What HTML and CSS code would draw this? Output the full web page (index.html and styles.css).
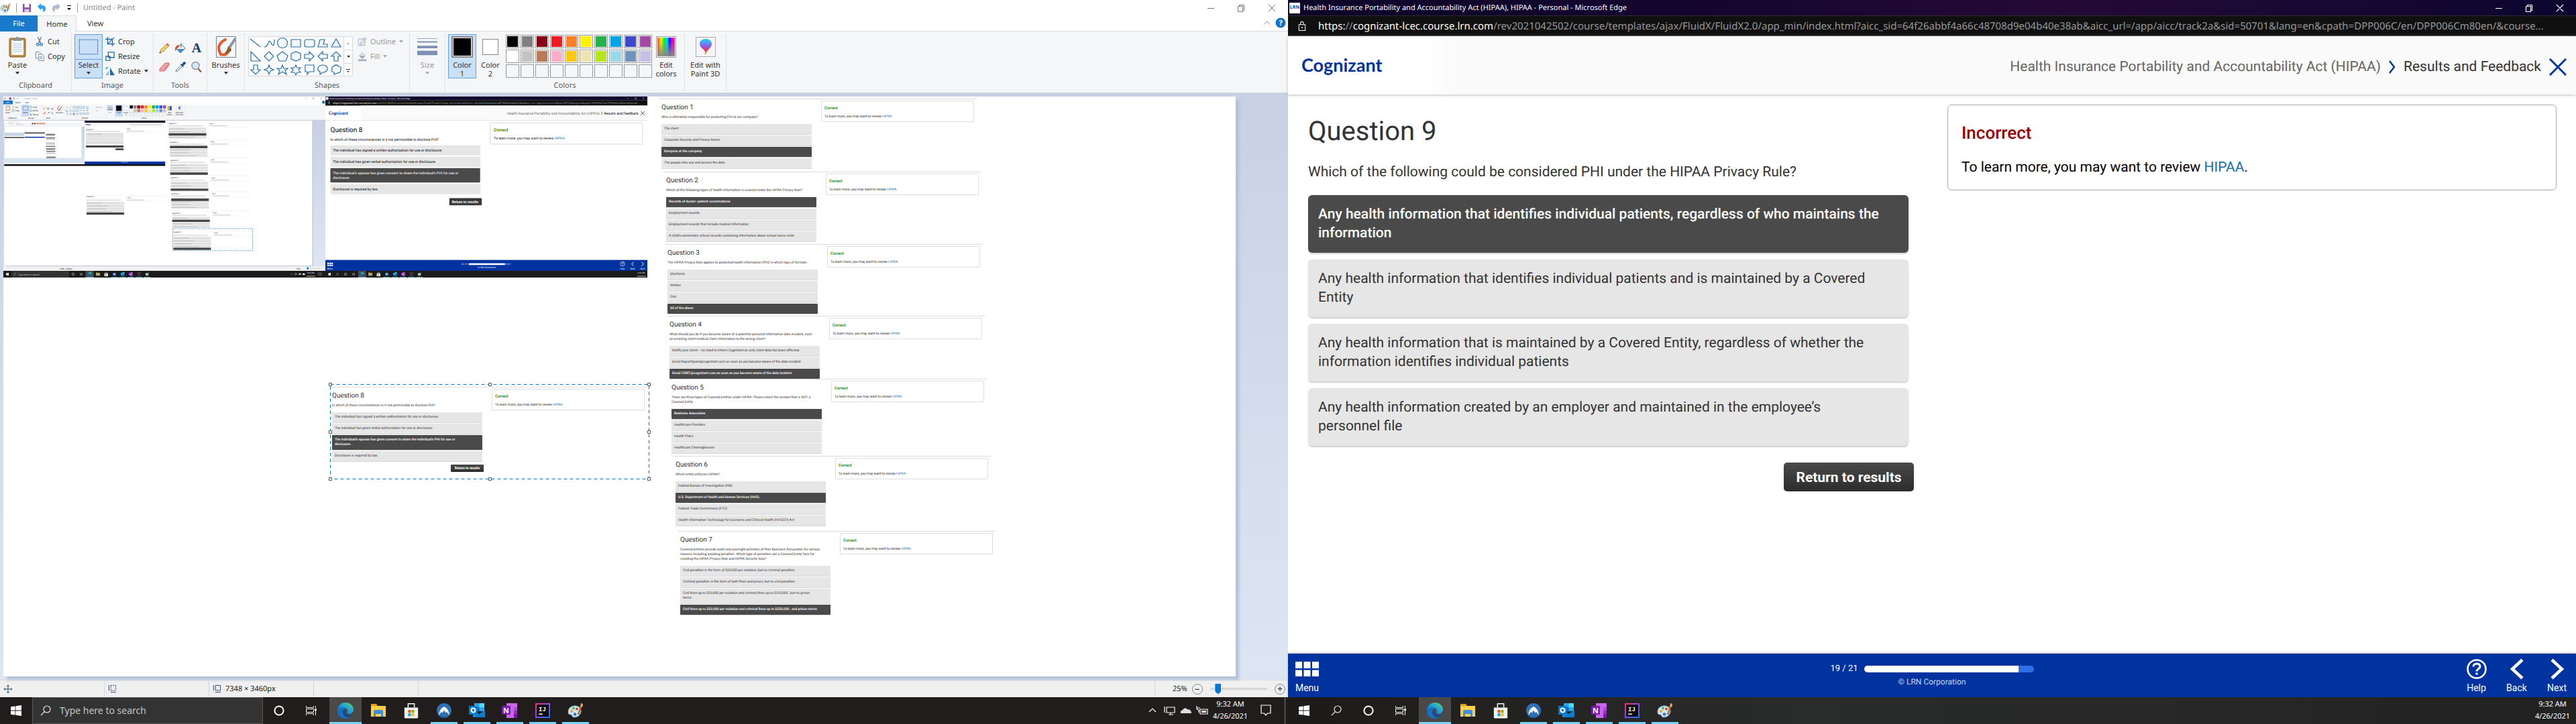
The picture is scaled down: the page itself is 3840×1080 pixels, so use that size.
FILE: index.html
```html
<!DOCTYPE html>
<html lang="en">
<head>
<meta charset="utf-8">
<title>Desktop</title>
<link rel="stylesheet" href="styles.css">
</head>
<body>
<svg class="defs" aria-hidden="true">
  <defs>
    <linearGradient id="g-edge" x1="0" y1="1" x2="1" y2="0"><stop offset="0" stop-color="#0c59a4"/><stop offset=".5" stop-color="#1b9de2"/><stop offset="1" stop-color="#5fd95a"/></linearGradient>
    <linearGradient id="g-ij" x1="0" y1="0" x2="1" y2="1"><stop offset="0" stop-color="#fe315d"/><stop offset=".5" stop-color="#8a4af7"/><stop offset="1" stop-color="#087cfa"/></linearGradient>
    <linearGradient id="g-rain" x1="0" x2="1" y1="0" y2="0"><stop offset="0" stop-color="#f33"/><stop offset=".2" stop-color="#fe0"/><stop offset=".4" stop-color="#0e2"/><stop offset=".55" stop-color="#0df"/><stop offset=".7" stop-color="#11f"/><stop offset=".85" stop-color="#e0e"/><stop offset="1" stop-color="#f14"/></linearGradient>
    <linearGradient id="g-fade" x1="0" x2="0" y1="0" y2="1"><stop offset=".2" stop-color="#888" stop-opacity="0"/><stop offset="1" stop-color="#888"/></linearGradient>
    <linearGradient id="g-p3d" x1="0" x2="0" y1="0" y2="1"><stop offset="0" stop-color="#18d8f5"/><stop offset=".4" stop-color="#7a6cf5"/><stop offset=".7" stop-color="#e0306a"/><stop offset="1" stop-color="#ffc20e"/></linearGradient>
    <linearGradient id="g-sky" x1="0" x2="0" y1="0" y2="1"><stop offset="0" stop-color="#c8d1e3"/><stop offset="1" stop-color="#dce6f3"/></linearGradient>
  </defs>
  <symbol id="i-start" viewBox="0 0 16 16"><path fill="#fff" d="M0 2.3 6.6 1.4V7.6H0zM7.4 1.3 16 0V7.6H7.4zM0 8.4H6.6V14.6L0 13.7zM7.4 8.4H16V16L7.4 14.7z"/></symbol>
  <symbol id="i-search" viewBox="0 0 16 16"><g fill="none" stroke="#e8e8e8" stroke-width="1.2"><circle cx="10" cy="6" r="5"/><path d="M6.4 9.6 1 15"/></g></symbol>
  <symbol id="i-cortana" viewBox="0 0 16 16"><circle cx="8" cy="8" r="6.6" fill="none" stroke="#fff" stroke-width="2"/></symbol>
  <symbol id="i-task" viewBox="0 0 16 16"><path fill="none" stroke="#fff" d="M.5 1v2.5h11V1M.5 15v-2.5h11V15M.5 5.5h11v5H.5zM14.5 1v3M14.5 8v7"/><path fill="#fff" d="M13 5h3v3h-3z"/></symbol>
  <symbol id="i-edge" viewBox="0 0 24 24"><path fill="url(#g-edge)" d="M12 0C19 0 24 5 24 10.5c0 4-3 6.500-7 6.500-3 0-3.500-1-2.500-2.500C16 12 14 7.500 9.500 7.500 4.500 7.500 1 10 0 13 0 5.500 5 0 12 0z"/><path fill="#1470c4" d="M0 13C1 9.500 4.500 7.500 9.500 7.500c1.500 0 3 .7 4 1.500-4 0-5.500 3-5.500 6 0 5 5 8 10 7-2 1.500-4 2-6 2C5 24 0 19 0 13z"/><path fill="#0d4a94" d="M9.500 11C7 14 9 21 15.500 21.500c2.500 0 5-1 6.500-3 .3-.5 0-.8-.5-.6-5 2-11-.5-12-6.900z"/></symbol>
  <symbol id="i-folder" viewBox="0 0 24 24"><path fill="#e3a008" d="M1 2h8l2 3H1z"/><path fill="#ffcf48" d="M1 5h22v16H1z"/><path fill="#3c8fdc" d="M5 21v-8q0-2 2-2h10q2 0 2 2v8h-3v-4H8v4z"/></symbol>
  <symbol id="i-store" viewBox="0 0 24 26"><path fill="none" stroke="#fff" stroke-width="1.600" d="M7 8V2h10v6"/><path fill="#f4f4f4" d="M1 8h22v16q0 1.500-2 1.500H3Q1 25.500 1 24z"/><path fill="#f25022" d="M7 12h4.500v4.500H7z"/><path fill="#7fba00" d="M12.500 12H17v4.500h-4.500z"/><path fill="#00a4ef" d="M7 17.500h4.500V22H7z"/><path fill="#ffb900" d="M12.500 17.500H17V22h-4.500z"/></symbol>
  <symbol id="i-nord" viewBox="0 0 24 24"><circle cx="12" cy="12" r="11" fill="#2f6fb4"/><path fill="#16386b" d="M3 17a11 11 0 0 0 18 0l-5 4H8z"/><path fill="#f2f7fc" d="M4 19Q5 9 12 6q7 3 8 13l-4-5-1.500 1.500-2.500-4-2.500 4L8 14z"/></symbol>
  <symbol id="i-outlook" viewBox="0 0 24 24"><path fill="#28a8ea" d="M8 1h15v12H8z"/><path fill="#50d9ff" d="M15.500 1H23v6h-7.500z"/><path fill="#0f6cbd" d="M8 7h7.500v6H8z"/><path fill="#1490df" d="M6 12l9 5 9-5v10H6z"/><path fill="#0a5ea8" d="M6 22 24 12v10z" opacity=".4"/><path fill="#0078d4" d="M0 5h13v13H0z"/><circle cx="6.500" cy="11.500" r="3" fill="none" stroke="#fff" stroke-width="2"/></symbol>
  <symbol id="i-onenote" viewBox="0 0 24 24"><path fill="#ca64ea" d="M7 1h16v22H7z"/><path fill="#ae4bd5" d="M18 7h5v5h-5z"/><path fill="#9332bf" d="M18 12h5v5h-5z"/><path fill="#7719aa" d="M18 17h5v6h-5z"/><path fill="#7719aa" d="M0 5h13v13H0z"/><text x="6.500" y="15.500" text-anchor="middle" font-family="Open Sans, sans-serif" font-weight="700" font-size="11" fill="#fff">N</text></symbol>
  <symbol id="i-ij" viewBox="0 0 24 24"><path fill="url(#g-ij)" d="M1 1h22v22H1z"/><path fill="#0b0b0b" d="M3 3h18v18H3z"/><path fill="#fff" d="M6 16.500h6V18H6z"/><text x="6" y="13" font-family="Liberation Mono, monospace" font-weight="700" font-size="9" fill="#fff">IJ</text></symbol>
  <symbol id="i-paint" viewBox="0 0 24 24"><path fill="#cfe4f2" stroke="#6f9fc0" stroke-width=".8" d="M9 5c7-1 12 3 11 9-1 5-5 8-10 8-4 0-3-4-5-4-4 0-4-2-4-4 0-5 3-8 8-9z"/><circle cx="6" cy="13" r="2" fill="#f0a020"/><circle cx="9" cy="8.500" r="2" fill="#54b848"/><circle cx="14" cy="9.500" r="2" fill="#e3402c"/><circle cx="11" cy="17.500" r="2.200" fill="#2b6fd0"/><path stroke="#b06a20" stroke-width="2.400" d="M16 18 20.500 5"/><path fill="#e9a060" d="M19 6l1-5q3 0 3 3l-1 3z"/></symbol>
  <symbol id="i-dots" viewBox="0 0 35 22"><path fill="#fff" d="M0 0h10v10H0zM12.500 0h10v10h-10zM25 0h10v10H25zM0 12.500h10v9.500H0zM12.500 12.500h10v9.500h-10zM25 12.500h10v9.500H25z"/></symbol>
  <symbol id="i-help" viewBox="0 0 32 32"><circle cx="16" cy="16" r="13.500" fill="none" stroke="#fff" stroke-width="2.600"/><path fill="none" stroke="#fff" stroke-width="3" d="M11 12.500c0-6 10-6 10-.5 0 4-5 3.500-5 7.500M16 21.500v3"/></symbol>
  <symbol id="i-back" viewBox="0 0 20 28"><path fill="none" stroke="#fff" stroke-width="4" d="M17 2 4 14l13 12"/></symbol>
  <symbol id="i-next" viewBox="0 0 20 28"><path fill="none" stroke="#fff" stroke-width="4" d="M3 2l13 12L3 26"/></symbol>
  <symbol id="i-clip" viewBox="0 0 26 32"><rect x="1" y="3" width="24" height="28" rx="2" fill="#b98843" stroke="#8a6227"/><path fill="#fff" stroke="#c8b890" stroke-width=".5" d="M4 6h18v22H4z"/><path stroke="#9ec1e0" d="M6 11h14M6 14h14M6 17h14M6 20h14M6 23h14"/><path fill="#8b939c" d="M7 4h3q0-3 3-3t3 3h3v3H7z"/></symbol>
  <symbol id="i-pencil" viewBox="0 0 18 18"><path fill="#f6cf65" stroke="#a0752c" stroke-width=".8" d="M2 16l2-5L13 2l3 3L7 14z"/><path fill="#e2574a" d="M12 3l1.500-1.500 3 3L15 6z"/><path fill="#333" d="M1.500 16.500l1-2.500 1.500 1.500z"/></symbol>
  <symbol id="i-bucket" viewBox="0 0 18 18"><path fill="#eef4fa" stroke="#58738f" d="M3 10 10 3l6 6-7 7z"/><path fill="#3e8ed0" d="M4 10h11l-6 6z"/><path fill="#e8542c" d="M1 9q1-5 7-5l-4 5q-1 3-3 4z"/><path fill="none" stroke="#58738f" d="M10 8V1"/></symbol>
  <symbol id="i-eraser" viewBox="0 0 18 18"><path fill="#f2a0a0" stroke="#b85858" stroke-width=".8" d="M2 12 10 3h6v3l-7 9H2z"/><path fill="#dd7474" d="M9 12l7-8v2l-7 9z"/></symbol>
  <symbol id="i-dropper" viewBox="0 0 18 18"><path fill="#cfe3f4" stroke="#58738f" stroke-width=".8" d="M2 16l1-3 7-7 2 2-7 7z"/><path fill="#1f4f86" d="M9 5l1-1 1 1 3-4q3 0 3 3l-4 3 1 1-1 1z"/></symbol>
  <symbol id="i-glass" viewBox="0 0 18 18"><circle cx="7.500" cy="7" r="5.500" fill="#d4e8f8" stroke="#8795a3" stroke-width="1.400"/><path stroke="#8b6a4a" stroke-width="2.600" d="M11.500 11.500 16 16.500"/></symbol>
  <symbol id="i-brush" viewBox="0 0 30 32"><path fill="#f4f9fd" stroke="#7a8087" d="M.5.5h29v31H.5z"/><path fill="none" stroke="#e8562a" stroke-width="4" stroke-linecap="round" d="M14 5C3 11 2 18 7 27q7 2 10-2"/><path stroke="#8b939c" stroke-width="4" d="M29 3l-9 14"/><path fill="#8a5a2b" d="M18 15l5 4q0 7-11 7 4-3 6-11z"/></symbol>
</svg>

<main class="desktop">
<section class="screen paint" aria-label="Paint">
  <header class="titlebar">
    <svg class="t-app"><use href="#i-paint"/></svg><i class="tsep"></i>
    <svg class="t-i" viewBox="0 0 16 16"><path fill="#8b57a8" d="M1 1h14v14H1z"/><path fill="#fff" d="M4 1h8v6H4z"/><path fill="#d9c8e6" d="M4 10h8v5H4z"/></svg>
    <svg class="t-i" viewBox="0 0 16 16"><path fill="#2ea3e8" d="M1 5 7 0v3q8 0 8 6 0 4-5 6 2-7-3-6v3z"/></svg>
    <svg class="t-i" viewBox="0 0 16 16"><path fill="#aebccb" d="M15 5 9 0v3Q1 3 1 9q0 4 5 6-2-7 3-6v3z"/></svg>
    <svg class="t-c" viewBox="0 0 8 8"><path d="M1 0h6v1H1zM1 4h6L4 7z"/></svg><i class="tsep"></i>
    <h1>Untitled - Paint</h1>
    <svg class="winbtns" viewBox="0 0 108 12"><g fill="none" stroke="#777"><path d="M2 6.500h10M47.500 3.500h7v8h-7zM49.500 3V1.500h7v8H55M93 1l10 10M103 1 93 11"/></g></svg>
  </header>
  <nav class="tabs"><button class="file">File</button><button class="home">Home</button><button class="view">View</button>
    <svg class="tabhelp" viewBox="0 0 34 16"><path fill="none" stroke="#888" d="M2 10l4-4 4 4"/><circle cx="26" cy="8" r="7.500" fill="#1572c6"/><text x="26" y="12" text-anchor="middle" font-size="11" font-weight="700" fill="#fff" font-family="Open Sans, sans-serif">?</text></svg></nav>
  <div class="ribbon">
    <div class="group g-clip"><div class="gb">
      <button class="big"><svg class="bi"><use href="#i-clip"/></svg>Paste<i class="dd"></i></button>
      <div class="rows"><button class="row"><svg viewBox="0 0 16 16"><path fill="none" stroke="#6c7883" stroke-width="1.500" d="M5 0l5 11M11 0 6 11"/><g fill="none" stroke="#2a79bd" stroke-width="1.600"><circle cx="5" cy="13" r="2"/><circle cx="11" cy="13" r="2"/></g></svg>Cut</button><button class="row"><svg viewBox="0 0 16 16"><path fill="#fff" stroke="#6c7883" d="M1.500.5h6l2 2v9h-8z"/><path fill="#fff" stroke="#6c7883" d="M6.500 4.500h6l2.500 2.500v8.500H6.500z"/><path stroke="#5aa0d8" d="M8 8.500h5M8 10.500h5M8 12.500h5"/></svg>Copy</button></div>
    </div><p>Clipboard</p></div>
    <div class="group g-image"><div class="gb">
      <button class="big sel split"><svg class="bi" viewBox="0 0 32 26"><path fill="none" stroke="#1e5a96" stroke-dasharray="2 1" d="M1.500 1.500h29v23h-29z"/></svg>Select<i class="dd"></i></button>
      <div class="rows"><button class="row"><svg viewBox="0 0 16 16"><path fill="none" stroke="#1e6aa8" stroke-width="1.500" d="M4 0v12h12M0 4h12v12M5 11 15 1"/></svg>Crop</button><button class="row"><svg viewBox="0 0 16 16"><path fill="#fff" stroke="#1e6aa8" stroke-width="1.500" d="M5 1h10v9H5zM1 8h7v7H1z"/></svg>Resize</button><button class="row"><svg viewBox="0 0 16 16"><path fill="#9fb6cc" d="M0 15h6V7z"/><path fill="#1e6aa8" d="M8 2v13h8z"/><path fill="none" stroke="#2ea3e8" stroke-width="1.500" d="M1 5q0-3 4-3"/></svg>Rotate<i class="dd"></i></button></div>
    </div><p>Image</p></div>
    <div class="group g-tools"><div class="gb tools">
      <svg><use href="#i-pencil"/></svg><svg><use href="#i-bucket"/></svg><b>A</b><svg><use href="#i-eraser"/></svg><svg><use href="#i-dropper"/></svg><svg><use href="#i-glass"/></svg>
    </div><p>Tools</p></div>
    <div class="group g-brush"><div class="gb"><button class="big"><svg class="bi"><use href="#i-brush"/></svg>Brushes<i class="dd"></i></button></div></div>
    <div class="group g-shapes"><div class="gb">
      <svg class="shapes" viewBox="0 0 156 60"><path fill="#fdfdfe" stroke="#d4d8de" d="M.5.5h155v59H.5z"/><path stroke="#d4d8de" d="M142.500 0v60M142 20.500h14M142 40.500h14"/>
        <g fill="#f2f8fd" stroke="#2a6fa8" stroke-width="1.200"><path d="M3 4l15 12"/><path fill="none" d="M24 16q4 0 6-6t5 2q4 6 4-7"/><circle cx="51" cy="10" r="7.500"/><path d="M64 5h14v11H64z"/><rect x="84" y="5" width="15" height="11" rx="3"/><path d="M104 16l3-11h7l-2 7h6v4z"/><path d="M124 16l7-12 7 12z"/>
        <path d="M4 23v14h14z"/><path d="M31 23l7 7-7 7-7-7z"/><path d="M51 23l8 6-3 8H46l-3-8z"/><path d="M64 26l7-3 7 3v8l-7 3-7-3z"/><path d="M84 27h7v-4l7 7-7 7v-4h-7z"/><path d="M118 27h-7v-4l-7 7 7 7v-4h7z"/><path d="M128 37v-7h-4l7-7 7 7h-4v7z"/>
        <path d="M8 43v7H4l7 7 7-7h-4v-7z"/><path d="M31 43l2 5 5 2-5 2-2 5-2-5-5-2 5-2z"/><path d="M51 43l2 5h6l-4 3 2 6-6-4-6 4 2-6-4-3h6z"/><path d="M71 43l2 4h5l-3 3 3 4h-5l-2 4-2-4h-5l3-4-3-3h5z"/><path d="M85 43h13v10H91l-3 4v-4h-3z"/><path d="M111 43c10 0 9 11 0 11l-4 3v-4c-6-3-3-10 4-10z"/><path d="M127 45q4-4 8 0 5 1 3 5 0 5-5 5l-5 2v-3q-5-1-3-5-1-3 2-4z"/></g>
        <path fill="#aaa" d="M147 12l2-3 2 3z"/><path fill="#333" d="M147 29h5l-2 3zM146 49h6v1h-6zM147 52h4l-2 2z"/></svg>
      <div class="rows off"><button class="row" disabled><svg viewBox="0 0 16 16"><path fill="#eef1f5" stroke="#9aa9bb" d="M1.500 3.500h11v11h-11zM4 13l1-3 8-9 2 2-8 9z"/></svg>Outline<i class="dd"></i></button><button class="row" disabled><svg viewBox="0 0 16 16"><path fill="#e5eaf0" stroke="#9aa9bb" d="M3 7l5-5 5 5-5 5z"/><path fill="#9aa9bb" d="M1 13h14v3H1zM3 7h10l-5 5z"/></svg>Fill<i class="dd"></i></button></div>
    </div><p>Shapes</p></div>
    <div class="group g-size off"><div class="gb"><button class="big" disabled><svg class="bi" viewBox="0 0 32 30"><path fill="#7d8fb3" d="M0 1h32v1H0zM0 6h32v2H0zM0 13h32v4H0zM0 21h32v7H0z"/></svg>Size<i class="dd"></i></button></div></div>
    <div class="group g-colors"><div class="gb">
      <button class="big sel"><span class="cur c1"></span>Color<br>1</button>
      <button class="big"><span class="cur c2"></span>Color<br>2</button>
      <div class="palette">
        <i style="background:#000"></i><i style="background:#7f7f7f"></i><i style="background:#880015"></i><i style="background:#ed1c24"></i><i style="background:#ff7f27"></i><i style="background:#fff200"></i><i style="background:#22b14c"></i><i style="background:#00a2e8"></i><i style="background:#3f48cc"></i><i style="background:#a349a4"></i>
        <i style="background:#fff"></i><i style="background:#c3c3c3"></i><i style="background:#b97a57"></i><i style="background:#ffaec9"></i><i style="background:#ffc90e"></i><i style="background:#efe4b0"></i><i style="background:#b5e61d"></i><i style="background:#99d9ea"></i><i style="background:#7092be"></i><i style="background:#c8bfe7"></i>
        <i class="e"></i><i class="e"></i><i class="e"></i><i class="e"></i><i class="e"></i><i class="e"></i><i class="e"></i><i class="e"></i><i class="e"></i><i class="e"></i>
      </div>
      <button class="big"><svg class="bi" viewBox="0 0 28 30"><path fill="#fff" stroke="#999" d="M.5.5h27v29H.5z"/><path fill="url(#g-rain)" d="M2 2h24v26H2z"/><path fill="url(#g-fade)" d="M2 2h24v26H2z"/></svg>Edit<br>colors</button>
    </div><p>Colors</p></div>
    <div class="group g-3d"><div class="gb"><button class="big"><svg class="bi" viewBox="0 0 30 30"><path fill="#f6f6f6" stroke="#aaa" d="M.5.5h29v29H.5z"/><path fill="url(#g-p3d)" d="M15 3c6 0 9 4 9 8 0 5-7 8-8 13q-1 3-3 3 2-3 0-7C9 17 6 14 6 10c0-4 4-7 9-7z"/></svg>Edit with<br>Paint 3D</button></div></div>
  </div>

  <div class="workspace"><div class="canvas">
    <svg class="shot" viewBox="0 0 3840 1080" role="img" aria-label="Pasted screenshot">
      <defs>
        <g id="apps"><rect x="-24" y="-20" width="48" height="40" fill="#4a4a4a"/><use href="#i-edge" x="-12" y="-12" width="24" height="24"/><use href="#i-folder" x="37" y="-12" width="24" height="24"/><use href="#i-store" x="86" y="-13" width="24" height="26"/><use href="#i-nord" x="136" y="-11" width="22" height="22"/><use href="#i-outlook" x="184" y="-12" width="24" height="24"/><use href="#i-onenote" x="233" y="-12" width="24" height="24"/><use href="#i-ij" x="283" y="-11" width="22" height="22"/><use href="#i-paint" x="331" y="-12" width="24" height="24"/><path stroke="#76d5f5" stroke-width="3" d="M-24 18.500h48M127 18.500h40M176 18.500h40M225 18.500h40M274 18.500h40M323 18.500h40"/></g>
        <g id="qt"><path stroke="#e2e2e2" d="M-3 .5h473"/><path fill="#fff" stroke="#ddd" d="M238.500 3.500h227v32h-227z"/><path stroke="#43974a" stroke-width="3" d="M243 14.500h22"/><path stroke="#777" stroke-width="2" stroke-dasharray="7 1" d="M243 27.500h86"/><path stroke="#4d94c8" stroke-width="2" d="M330 27.500h18"/><path stroke="#888" stroke-width="2" stroke-dasharray="9 1" d="M0 28.500h205"/></g>
        <g id="q4"><use href="#qt"/><path fill="#e2e2e2" d="M0 38h224v15H0zM0 55h224v15H0zM0 72h224v15H0zM0 89h224v15H0z"/><path stroke="#999" stroke-width="2" stroke-dasharray="8 1" d="M4 45.500h90M4 62.500h120M4 79.500h110M4 96.500h150"/></g>
      </defs>
      <rect width="1920" height="1080" fill="#fff"/>
      <use href="#i-paint" x="2" y="4" width="16" height="16"/><path fill="#8b57a8" d="M34 5h14v14H34z"/><path fill="#2ea3e8" d="M56 10l6-6v4q8 0 6 8l-5 3q2-6-1-7v3z"/><path fill="#b8c4d0" d="M92 10l-6-6v4q-8 0-6 8l5 3q-2-6 1-7v3z"/><path stroke="#999" d="M23.500 5v14M115.500 5v14"/>
      <path fill="#1979ca" d="M0 23h56v24H0z"/><path fill="#f5f6f7" d="M0 47h1920v92H0zM56 23h57v24H56z"/>
      <path fill="none" stroke="#777" stroke-width="1.500" d="M1800 11h10M1845 7h8v8h-8zM1890 6l10 10M1900 6l-10 10"/><circle cx="1909" cy="34" r="9" fill="#1572c6"/>
      <path fill="#c9e0f7" stroke="#62a2e4" d="M111 51h42v66h-42zM668 51h42v66h-42z"/>
      <path stroke="#dcdde0" d="M106.500 49v86M228.500 49v86M308.500 49v86M364.500 49v86M610.500 49v86M663.500 49v86M1020.500 49v86M1082.500 49v86"/>
      <use href="#i-clip" x="14" y="53" width="26" height="32"/><use href="#i-brush" x="320" y="54" width="30" height="32"/><use href="#i-pencil" x="235" y="62" width="18" height="18"/><use href="#i-bucket" x="259" y="62" width="18" height="18"/><use href="#i-eraser" x="235" y="90" width="18" height="18"/><use href="#i-dropper" x="259" y="90" width="18" height="18"/><use href="#i-glass" x="283" y="90" width="18" height="18"/>
      <path fill="none" stroke="#1e5a96" stroke-width="1.500" d="M117 58h30v24h-30zM159 57h10v10h-10zM159 79h10v10h-10zM52 77h12v14H52zM56 55l5 14"/><path fill="#1e6aa8" d="M160 112v-12l9 12z"/><path fill="#7d8fb3" d="M620 54h32v2h-32zM620 60h32v3h-32zM620 67h32v4h-32zM620 75h32v7h-32z"/>
      <g fill="#f2f8fd" stroke="#2a6fa8" stroke-width="1.500"><path d="M374 58l14 12M396 69l10-10M434 59h14v11h-14zM454 59h14v11h-14zM474 70l4-11h8l-3 11zM494 70l7-12 7 12zM374 77v14h14zM401 77l7 7-7 7-7-7zM434 80l7-3 7 3v8l-7 3-7-3zM454 84h14l-7-7M488 84h-14l7-7M501 77v14M494 84l7-7 7 7M381 97v14l-7-7M401 97v14M394 104h14M421 97l6 14-13-9h14l-13 9zM434 100h14l-7 11zM454 98h14v9h-10zM474 98h14v9h-10zM494 98h14v9h-10z"/><circle cx="421" cy="64" r="7"/><path d="M421 77l8 6-3 8h-10l-3-8z"/></g>
      <path fill="#000" d="M673 54h32v32h-32z"/><path fill="#fff" stroke="#888" d="M719 58h24v24h-24z"/>
      <g><path fill="#000" d="M754 53h18v18h-18z"/><path fill="#7f7f7f" d="M776 53h18v18h-18z"/><path fill="#880015" d="M798 53h18v18h-18z"/><path fill="#ed1c24" d="M820 53h18v18h-18z"/><path fill="#ff7f27" d="M842 53h18v18h-18z"/><path fill="#fff200" d="M864 53h18v18h-18z"/><path fill="#22b14c" d="M886 53h18v18h-18z"/><path fill="#00a2e8" d="M908 53h18v18h-18z"/><path fill="#3f48cc" d="M930 53h18v18h-18z"/><path fill="#a349a4" d="M952 53h18v18h-18z"/><path fill="#fff" stroke="#999" d="M754 75h18v18h-18z"/><path fill="#c3c3c3" d="M776 75h18v18h-18z"/><path fill="#b97a57" d="M798 75h18v18h-18z"/><path fill="#ffaec9" d="M820 75h18v18h-18z"/><path fill="#ffc90e" d="M842 75h18v18h-18z"/><path fill="#efe4b0" d="M864 75h18v18h-18z"/><path fill="#b5e61d" d="M886 75h18v18h-18z"/><path fill="#99d9ea" d="M908 75h18v18h-18z"/><path fill="#7092be" d="M930 75h18v18h-18z"/><path fill="#c8bfe7" d="M952 75h18v18h-18z"/><path fill="none" stroke="#999" d="M754 97h216v18H754zM776 97v18M798 97v18M820 97v18M842 97v18M864 97v18M886 97v18M908 97v18M930 97v18M952 97v18"/></g>
      <path fill="url(#g-rain)" d="M980 57h24v26h-24z"/><path fill="#fff" stroke="#aaa" d="M1035 55h30v30h-30z"/><path fill="url(#g-p3d)" d="M1050 58c8 0 10 8 6 12l-6 12-6-12c-4-4-2-12 6-12z"/>
      <g class="ui"><text x="123" y="17" fill="#777">Untitled - Paint</text><text x="18" y="39" fill="#fff">File</text><text x="70" y="39">Home</text><text x="129" y="39">View</text>
      <g text-anchor="middle"><text x="26" y="100">Paste</text><text x="132" y="100">Select</text><text x="335" y="100">Brushes</text><text x="635" y="100" fill="#999">Size</text><text x="689" y="100">Color</text><text x="689" y="113">1</text><text x="731" y="100">Color</text><text x="731" y="113">2</text><text x="992" y="100">Edit</text><text x="992" y="113">colors</text><text x="1050" y="100">Edit with</text><text x="1050" y="113">Paint 3D</text><text x="53" y="133">Clipboard</text><text x="166" y="133">Image</text><text x="267" y="133">Tools</text><text x="486" y="133">Shapes</text><text x="840" y="133">Colors</text><text x="291" y="77" font-weight="700">A</text></g>
      <text x="70" y="66">Cut</text><text x="70" y="88">Copy</text><text x="175" y="66">Crop</text><text x="175" y="88">Resize</text><text x="175" y="110">Rotate</text><text x="552" y="66" fill="#999">Outline</text><text x="552" y="88" fill="#999">Fill</text></g>
      <path fill="url(#g-sky)" d="M0 139h1920v875H0z"/><path fill="#b9c5da" d="M14 152h1833v862H14z"/><path fill="#fff" d="M5 144h1837v865H5z"/>
      <path fill="#f5f6f7" d="M5 156h480v23H5z"/><path fill="url(#g-sky)" d="M5 179h480v219H5z"/><path fill="#fff" d="M7 180h459v187H7z"/><path fill="#c9d4e6" d="M7 215h118v20H7z"/><path fill="#f0f0f0" d="M5 398h480v6H5z"/>
      <path fill="none" stroke="#888" stroke-dasharray="5 3" stroke-width="2" d="M30 151h60M30 161h30M75 168h50M80 162h18"/><path fill="#111" d="M127 215h120v5H127zM5 404h960v10H5zM7 242h117v5H7z"/><path fill="#0033a0" d="M127 240h120v6H127z"/><path stroke="#ed5c24" stroke-width="7" stroke-dasharray="5 2" d="M195 161h54"/><path stroke="#222" stroke-width="7" stroke-dasharray="8 5" d="M170 161h22"/>
      <g><path fill="#ccc" d="M254 220h54v13h-54zM254 245h54v14h-54zM254 273h54v14h-54zM255 305h54v10h-54zM256 332h54v10h-54zM257 355h54v10h-54z"/><path fill="#333" d="M254 226h54v4h-54zM254 245h54v3h-54zM254 295h54v4h-54zM255 312h54v4h-54zM256 324h54v4h-54zM257 362h54v4h-54z"/><path stroke="#8bbd8b" stroke-width="2" d="M310 217h6M313 244h6M313 271h6M313 297h6M314 321h6M315 350h6"/></g>
      <path fill="#fff" d="M485 144h480v260H485z"/><path fill="#12061f" d="M485 144h480v13H485z"/><path fill="#fafafa" d="M485 157h480v22H485z"/><path stroke="#1b3d9c" stroke-width="4" d="M490 168h32"/><path stroke="#888" stroke-width="2" stroke-dasharray="8 1" d="M755 168h190"/>
      <use href="#q4" x="492" y="179"/><path fill="#e2e2e2" d="M492 230h224v55H492z"/><path stroke="#fff" stroke-width="2" d="M492 246h224M492 262h224"/><path fill="#444" d="M492 292h224v12H492zM669 309h48v11H669z"/><path fill="#0033a0" d="M485 388h480v16H485z"/><path stroke="#fff" stroke-width="2" d="M700 393h46"/>
      <g class="hd"><text x="492" y="198">Question 7</text><text x="987" y="165">Question 1</text><text x="993" y="274">Question 2</text><text x="995" y="382">Question 3</text><text x="998" y="489">Question 4</text><text x="1007" y="698">Question 6</text><text x="1014" y="810">Question 7</text><text x="496" y="601">Question 7</text></g>
      <use href="#q4" x="986" y="147"/><use href="#q4" x="993" y="256"/><use href="#q4" x="995" y="364"/><use href="#q4" x="998" y="471"/><path fill="#fff" d="M998 565h500v14H998z"/><use href="#q4" x="1001" y="565"/><use href="#q4" x="1007" y="680"/><use href="#q4" x="1014" y="799"/><use href="#q4" x="496" y="590"/><text class="hdt" x="1001" y="583">Question 5</text>
      <path fill="#444" d="M986 219h224v14H986zM993 294h224v14H993zM995 453h224v14H995zM998 550h224v12H998zM1001 609h224v14h-224zM1007 735h224v13h-224zM1014 902h224v13h-224zM496 692h224v13H496z"/>
      <path fill="none" stroke="#1b87d6" stroke-width="3" stroke-dasharray="8 6" d="M1010 788h476v131h-476z"/>
      <path fill="#f0f0f0" d="M0 1014h1920v26H0z"/><g class="ui"><text x="336" y="1032">7348 × 3460px</text><text x="1749" y="1032">25%</text></g><path fill="#0078d7" d="M1810 1018h9v14h-9z"/><path stroke="#bbb" stroke-width="2" d="M1820 1027h68"/>
      <rect y="1040" width="3840" height="40" fill="#1c1b1b"/><path fill="#333" d="M48 1040h344v40H48z"/><use href="#i-start" x="16" y="1052" width="16" height="16"/><use href="#i-search" x="60" y="1052" width="16" height="16"/><text x="88" y="1066" fill="#ccc" font-size="14" font-family="Noto Sans, sans-serif">Type here to search</text><use href="#i-cortana" x="408" y="1052" width="16" height="16"/><use href="#i-task" x="456" y="1052" width="16" height="16"/><use href="#apps" x="515" y="1060"/>
      <g fill="none" stroke="#fff" stroke-width="1.500"><path d="M1713 1063l5-5 5 5M1737 1055h12v8h-12zM1879 1053h16v12h-6l-3 3-3-3h-4z"/></g><path fill="#fff" d="M1760 1062h15v-4l-8-4-7 5zM1784 1056h14v8h-14z"/><g class="ui lt" text-anchor="middle"><text x="1834" y="1056">9:32 AM</text><text x="1834" y="1074">4/26/2021</text><text x="3805" y="1056">9:32 AM</text><text x="3805" y="1074">4/26/2021</text></g>
      <use href="#i-start" x="1937" y="1052" width="16" height="16"/><use href="#i-search" x="1984" y="1052" width="16" height="16"/><use href="#i-cortana" x="2032" y="1052" width="16" height="16"/><use href="#i-task" x="2080" y="1052" width="16" height="16"/><use href="#apps" x="2139" y="1060"/>
      <rect x="1920" width="1920" height="1040" fill="#fff"/><rect x="1920" width="1920" height="23" fill="#10062a"/><rect x="1920" y="23" width="1920" height="31" fill="#101010"/><rect x="1922" y="3" width="16" height="16" fill="#fff"/><g font-family="Noto Sans, sans-serif"><text x="1943" y="17" fill="#fff" font-size="11">Health Insurance Portability and Accountability Act (HIPAA), HIPAA - Personal - Microsoft Edge</text><text x="1965" y="44" fill="#999" font-size="15"><tspan fill="#fff">https://cognizant-lcec.course.lrn.com</tspan>/rev2021042502/course/templates/ajax/FluidX/FluidX2.0/app_min/index.html?aicc_sid=64f26abbf4a66c48708d9e04b40e38ab&amp;aicc_url=/app/aicc/track2a&amp;sid=50701&amp;lang=en&amp;cpath=DPP006C/en/DPP006Cm80en/&amp;course...</text></g>
      <path fill="none" stroke="#fff" stroke-width="1.500" d="M3719 11h10M3766 7h8v8h-8zM3812 6l10 10M3822 6l-10 10M1938 34h8v9h-8zM1940 34v-4h4v4"/>
      <g class="rb"><rect x="2130" y="54" width="1710" height="87" fill="#fafafa"/><path stroke="#ddd" stroke-width="3" d="M1920 142h1920"/><text x="1940" y="106" class="cg">Cognizant</text><text x="3003" y="108" fill="#666" font-size="21">Health Insurance Portability and Accountability Act (HIPAA)</text><path fill="none" stroke="#0033a0" stroke-width="3" d="M3565 91l6 9-6 9M3800 88l24 24M3824 88l-24 24"/><text x="3582" y="108" font-size="21">Results and Feedback</text>
      <text x="1950" y="210" font-size="40">Question 8</text><text x="1950" y="264" font-size="21">In which of these circumstances is it not permissible to disclose PHI?</text>
      <g fill="#e6e6e6"><rect x="1950" y="291" width="895" height="60" rx="6"/><rect x="1950" y="359" width="895" height="60" rx="6"/><rect x="1950" y="427" width="893" height="86" rx="6" fill="#4a4a4a"/><rect x="1950" y="523" width="895" height="60" rx="6"/><rect x="2659" y="606" width="194" height="43" rx="6" fill="#3a3a3a"/></g>
      <g font-size="21"><text x="1965" y="327">The individual has signed a written authorization for use or disclosure.</text><text x="1965" y="395">The individual has given verbal authorization for use or disclosure.</text><g fill="#fff"><text x="1965" y="463">The individual's spouse has given consent to share the individual's PHI for use or</text><text x="1965" y="491">disclosure.</text></g><text x="1965" y="559">Disclosure is required by law.</text><text x="2675" y="635" fill="#fff" font-weight="700">Return to results</text></g>
      <rect x="2903" y="157" width="908" height="127" rx="6" fill="#fff" stroke="#ccc" stroke-width="3"/><text x="2924" y="208" font-size="26" fill="#008000" font-weight="500">Correct</text><text x="2924" y="257" font-size="21" fill="#111">To learn more, you may want to review <tspan fill="#1570b0">HIPAA</tspan>.</text>
      <rect x="1920" y="975" width="1920" height="65" fill="#0033a0"/><use href="#i-dots" x="1931" y="990" width="35" height="22"/><rect x="2774" y="995" width="253" height="10" rx="5" fill="#2f6ee6"/><rect x="2774" y="995" width="218" height="10" rx="5" fill="#fff"/><g fill="#fff" font-size="13"><text x="1931" y="1033">Menu</text><text x="2728" y="1005">18 / 21</text><text x="2828" y="1025">© LRN Corporation</text><text x="3678" y="1033">Help</text><text x="3738" y="1033">Back</text><text x="3798" y="1033">Next</text></g><use href="#i-help" x="3676" y="983" width="32" height="32"/><use href="#i-back" x="3742" y="985" width="20" height="28"/><use href="#i-next" x="3802" y="985" width="20" height="28"/></g>
    </svg>

    <article class="snip s1"><div class="mini"><h3>Question 1</h3><p class="ask">Who is ultimately responsible for protecting PHI at our company?</p><ul class="opts"><li>The client</li><li>Corporate Security and Privacy teams</li><li class="on">Everyone at the company</li><li>The people who use and access the data</li></ul></div><aside class="fb"><h4>Correct</h4><p>To learn more, you may want to review <a href="#hipaa">HIPAA</a>.</p></aside></article>
    <article class="snip s2"><div class="mini"><h3>Question 2</h3><p class="ask">Which of the following types of health information is covered under the HIPAA Privacy Rule?</p><ul class="opts"><li class="on">Records of doctor–patient conversations</li><li>Employment records</li><li>Employment records that include medical information</li><li>A child's elementary school records containing information about school nurse visits</li></ul></div><aside class="fb"><h4>Correct</h4><p>To learn more, you may want to review <a href="#hipaa">HIPAA</a>.</p></aside></article>
    <article class="snip s3"><div class="mini"><h3>Question 3</h3><p class="ask">The HIPAA Privacy Rule applies to protected health information (PHI) in which type of formats:</p><ul class="opts"><li>Electronic</li><li>Written</li><li>Oral</li><li class="on">All of the above</li></ul></div><aside class="fb"><h4>Correct</h4><p>To learn more, you may want to review <a href="#hipaa">HIPAA</a>.</p></aside></article>
    <article class="snip s4"><div class="mini"><h3>Question 4</h3><p class="ask">What should you do if you become aware of a potential personal information data incident, such as emailing client medical claim information to the wrong client?</p><ul class="opts"><li>Notify your client – no need to inform Cognizant as only client data has been affected.</li><li>Email ReportSpam@cognizant.com as soon as you become aware of the data incident.</li><li class="on">Email CSIRT@cognizant.com as soon as you become aware of the data incident.</li></ul></div><aside class="fb"><h4>Correct</h4><p>To learn more, you may want to review <a href="#hipaa">HIPAA</a>.</p></aside></article>
    <article class="snip s5"><div class="mini"><h3>Question 5</h3><p class="ask">There are three types of Covered Entities under HIPAA. Please select the answer that is NOT a Covered Entity.</p><ul class="opts"><li class="on">Business Associates</li><li>Healthcare Providers</li><li>Health Plans</li><li>Healthcare Clearinghouses</li></ul></div><aside class="fb"><h4>Correct</h4><p>To learn more, you may want to review <a href="#hipaa">HIPAA</a>.</p></aside></article>
    <article class="snip s6"><div class="mini"><h3>Question 6</h3><p class="ask">Which entity enforces HIPAA?</p><ul class="opts"><li>Federal Bureau of Investigation (FBI)</li><li class="on">U.S. Department of Health and Human Services (HHS)</li><li>Federal Trade Commission (FTC)</li><li>Health Information Technology for Economic and Clinical Health (HITECH) Act</li></ul></div><aside class="fb"><h4>Correct</h4><p>To learn more, you may want to review <a href="#hipaa">HIPAA</a>.</p></aside></article>
    <article class="snip s7"><div class="mini"><h3>Question 7</h3><p class="ask">Covered Entities provide audit and oversight activities of their Business Associates for various reasons including avoiding penalties. Which type of penalties can a Covered Entity face for violating the HIPAA Privacy Rule and HIPAA Security Rule?</p><ul class="opts"><li>Civil penalties in the form of $50,000 per violation, but no criminal penalties</li><li>Criminal penalties in the form of both fines and prison, but no civil penalties</li><li>Civil fines up to $50,000 per violation and criminal fines up to $250,000 , but no prison<br>terms</li><li class="on">Civil fines up to $50,000 per violation and criminal fines up to $250,000 , and prison terms</li></ul></div><aside class="fb"><h4>Correct</h4><p>To learn more, you may want to review <a href="#hipaa">HIPAA</a>.</p></aside></article>
    <article class="snip s8"><div class="mini"><h3>Question 8</h3><p class="ask">In which of these circumstances is it not permissible to disclose PHI?</p><ul class="opts"><li>The individual has signed a written authorization for use or disclosure.</li><li>The individual has given verbal authorization for use or disclosure.</li><li class="on">The individual's spouse has given consent to share the individual's PHI for use or<br>disclosure.</li><li>Disclosure is required by law.</li></ul><button class="ret">Return to results</button></div><aside class="fb"><h4>Correct</h4><p>To learn more, you may want to review <a href="#hipaa">HIPAA</a>.</p></aside></article>
    <svg class="marquee" viewBox="0 0 480 146"><path fill="none" stroke="#0078d7" stroke-dasharray="5 4" d="M2.500 2.500h475v141H2.500z"/><g fill="#fff" stroke="#555"><path d="M.5.5h4v4h-4zM238.500.5h4v4h-4zM475.500.5h4v4h-4zM.5 71.500h4v4h-4zM475.500 71.500h4v4h-4zM.5 141.500h4v4h-4zM238.500 141.500h4v4h-4zM475.500 141.500h4v4h-4z"/></g></svg>
  </div></div>

  <footer class="status">
    <span class="cell"><svg viewBox="0 0 14 14"><path fill="none" stroke="#1f3c63" d="M7.500 1v12M1 7.500h12M5.500 3l2-2 2 2M5.500 12l2 2 2-2M3 5.500l-2 2 2 2M12 5.500l2 2-2 2"/></svg></span>
    <span class="cell"><svg viewBox="0 0 14 14"><path fill="none" stroke="#1f3c63" d="M1.500 1v9M4 12.500h9"/><path fill="none" stroke="#1f3c63" stroke-dasharray="2 1" d="M4.500 1.500h8v8h-8z"/></svg></span>
    <span class="cell"><svg viewBox="0 0 14 14"><path fill="none" stroke="#1f3c63" d="M1.500 1v9M4 12.500h9M4.500 1.500h8v8h-8z"/></svg>7348 × 3460px</span>
    <span class="cell"></span><span class="cell rest"></span>
    <label class="zoom">25%<button class="zb" aria-label="Zoom out">−</button><input type="range" min="0" max="100" value="10" aria-label="Zoom"><button class="zb" aria-label="Zoom in">+</button></label>
  </footer>
  <footer class="taskbar">
    <button class="tk"><svg class="s16"><use href="#i-start"/></svg></button>
    <label class="search"><svg class="s16"><use href="#i-search"/></svg><input type="text" placeholder="Type here to search" aria-label="Type here to search"></label>
    <button class="tk"><svg class="s16"><use href="#i-cortana"/></svg></button><button class="tk"><svg class="s16"><use href="#i-task"/></svg></button>
    <button class="app cur-app"><svg><use href="#i-edge"/></svg></button><button class="app"><svg><use href="#i-folder"/></svg></button><button class="app"><svg><use href="#i-store"/></svg></button><button class="app run"><svg><use href="#i-nord"/></svg></button><button class="app run"><svg><use href="#i-outlook"/></svg></button><button class="app run"><svg><use href="#i-onenote"/></svg></button><button class="app run"><svg><use href="#i-ij"/></svg></button><button class="app run"><svg><use href="#i-paint"/></svg></button>
    <svg class="tray" viewBox="0 0 90 20"><g fill="none" stroke="#fff" stroke-width="1.200"><path d="M2 12l5-5 5 5M28 5h12v8H28zM31 16h7M34 13v3M25 4v9"/></g><path fill="#ddd" d="M49 14q-1-4 3-5 3-5 7-1 6 0 6 6z"/><path fill="none" stroke="#fff" stroke-width="1.200" d="M78 8h11v7H78zM73 6h5M73 3v3q0 3 3 3v4"/><path fill="#fff" d="M80 10h7v3h-7z"/></svg>
    <p class="clock">9:32 AM<br>4/26/2021</p>
    <svg class="note" viewBox="0 0 16 18"><path fill="none" stroke="#fff" stroke-width="1.200" d="M1 1h14v12h-4.500L8 16l-2.500-3H1z"/></svg>
    <i class="desk"></i>
  </footer>
</section>

<section class="screen edge" aria-label="Microsoft Edge">
  <header class="etitle"><span class="fav">LRN</span><h1>Health Insurance Portability and Accountability Act (HIPAA), HIPAA - Personal - Microsoft Edge</h1><svg class="winbtns" viewBox="0 0 108 12"><path fill="none" stroke="#fff" stroke-width="1.200" d="M2 6.500h10M47.500 3.500h7v8h-7zM49.500 3V1.500h7v8H55M93 1l10 10M103 1 93 11"/></svg></header>
  <div class="url"><svg viewBox="0 0 14 18"><path fill="none" stroke="#fff" stroke-width="1.200" d="M1.500 6.500h11v10h-11zM4.500 6.500v-3q0-2.500 2.500-2.500t2.500 2.500v3"/><circle cx="7" cy="11.500" r="1.200" fill="#fff"/></svg><p><b>https:</b>//<b>cognizant-lcec.course.lrn.com</b>/rev2021042502/course/templates/ajax/FluidX/FluidX2.0/app_min/index.html?aicc_sid=64f26abbf4a66c48708d9e04b40e38ab&amp;aicc_url=/app/aicc/track2a&amp;sid=50701&amp;lang=en&amp;cpath=DPP006C/en/DPP006Cm80en/&amp;course...</p></div>
  <header class="chead"><span class="logo">Cognizant</span><nav class="crumbs"><span class="c-a">Health Insurance Portability and Accountability Act (HIPAA)</span><svg class="chev" viewBox="0 0 10 20"><path fill="none" stroke="#0033a0" stroke-width="2.400" d="M1 1l7 9-7 9"/></svg><span>Results and Feedback</span><button class="x" aria-label="Close"><svg viewBox="0 0 26 26"><path stroke="#0033a0" stroke-width="3" d="M1 1l24 24M25 1 1 25"/></svg></button></nav></header>
  <div class="quiz"><div class="full"><h2>Question 9</h2><p class="ask">Which of the following could be considered PHI under the HIPAA Privacy Rule?</p><ul class="opts"><li class="on">Any health information that identifies individual patients, regardless of who maintains the information</li><li>Any health information that identifies individual patients and is maintained by a Covered Entity</li><li>Any health information that is maintained by a Covered Entity, regardless of whether the information identifies individual patients</li><li>Any health information created by an employer and maintained in the employee’s personnel file</li></ul><button class="ret">Return to results</button></div>
    <aside class="fb bad"><h4>Incorrect</h4><p>To learn more, you may want to review <a href="#hipaa">HIPAA</a>.</p></aside></div>
  <footer class="cfoot"><button class="fbtn menu"><svg><use href="#i-dots"/></svg>Menu</button>
    <div class="prog"><div class="pl"><span>19 / 21</span><div class="bar"><i style="width:91%"></i></div></div><p>© LRN Corporation</p></div>
    <div class="fnav"><button class="fbtn"><svg><use href="#i-help"/></svg>Help</button><button class="fbtn"><svg><use href="#i-back"/></svg>Back</button><button class="fbtn"><svg><use href="#i-next"/></svg>Next</button></div></footer>
  <footer class="taskbar">
    <button class="tk"><svg class="s16"><use href="#i-start"/></svg></button><button class="tk"><svg class="s16"><use href="#i-search"/></svg></button><button class="tk"><svg class="s16"><use href="#i-cortana"/></svg></button><button class="tk"><svg class="s16"><use href="#i-task"/></svg></button>
    <button class="app cur-app"><svg><use href="#i-edge"/></svg></button><button class="app"><svg><use href="#i-folder"/></svg></button><button class="app"><svg><use href="#i-store"/></svg></button><button class="app run"><svg><use href="#i-nord"/></svg></button><button class="app run"><svg><use href="#i-outlook"/></svg></button><button class="app run"><svg><use href="#i-onenote"/></svg></button><button class="app run"><svg><use href="#i-ij"/></svg></button><button class="app run"><svg><use href="#i-paint"/></svg></button>
    <p class="clock last">9:32 AM<br>4/26/2021</p>
  </footer>
</section>
</main>
</body>
</html>
```
FILE: styles.css
```css
*{box-sizing:border-box}
body,h1,h2,h3,h4,p,ul{margin:0;padding:0}
ul{list-style:none}
a{text-decoration:none;color:#1570b0}
button{border:0;background:none;padding:0;margin:0;font:inherit;color:inherit}
i{font-style:normal}
svg{display:block;flex:none}
.defs{position:absolute;width:0;height:0}
body{font:11px/16px "Noto Sans","Open Sans",sans-serif;color:#333;text-rendering:geometricPrecision}
.desktop{display:grid;grid-template-columns:1fr 1fr;min-height:100vh}
.screen{display:flex;flex-direction:column;min-width:0;background:#fff}

/* Paint title bar and tabs */
.titlebar{display:flex;align-items:center;height:23px;gap:8px}
.titlebar h1{font-size:11px;font-weight:400;color:#8a8a8a}
.t-app{width:16px;height:16px}
.tsep{width:1px;height:14px;background:#999}
.t-i{width:14px;height:14px}
.t-c{width:8px;height:8px}
.winbtns{width:108px;height:12px;margin-left:auto;margin-right:14px}
.tabs{display:flex;height:24px;border-bottom:1px solid #dadbdc}
.tabs button{height:24px}
.file{width:56px;background:#1979ca;color:#fff}
.home{width:58px;background:#f5f6f7;border:1px solid #dadbdc;border-bottom:0}
.view{width:56px}
.tabhelp{width:34px;height:16px;margin:3px 3px 0 auto}
/* ribbon */
.ribbon{display:flex;height:92px;background:#f5f6f7;border-bottom:1px solid #d4d6d9;padding:2px 0}
.group{display:flex;flex-direction:column;justify-content:space-between;border-right:1px solid #dfe1e4;padding-top:2px}
.group>p{text-align:center;color:#5a5a5a}
.gb{display:flex;height:66px}
.g-clip{width:107px}.g-image{width:122px}.g-tools{width:80px}.g-brush{width:56px}.g-shapes{width:246px}.g-size{width:53px}.g-colors{width:357px}.g-3d{width:62px}
.big{display:flex;flex-direction:column;align-items:center;width:42px;height:66px;line-height:13px;text-align:center;border:1px solid transparent}
.bi{width:30px;height:32px;margin:2px 0 4px}
.sel{background:#c9e0f7;border-color:#62a2e4}
.split{background:linear-gradient(#c9e0f7 36px,#62a2e4 36px,#62a2e4 37px,#c9e0f7 37px)}
.dd{width:0;height:0;border:3px solid transparent;border-top:4px solid #333;border-bottom:0;margin-top:4px}
.rows{display:flex;flex-direction:column}
.row{display:flex;align-items:center;gap:5px;height:22px}
.row svg{width:14px;height:14px}
.row .dd{margin:0}
.off,.off button{color:#999}
.off .dd{border-top-color:#aaa}
.g-clip .gb{padding-left:5px;gap:5px}
.g-image .gb{padding-left:4px;gap:4px}
.tools{padding:6px 3px 4px 4px;justify-items:center;align-items:center;display:grid;grid-template-columns:repeat(3,24px)}
.tools svg{width:18px;height:18px}
.tools b{font:700 20px/20px "Liberation Serif",serif;color:#1f3c63}
.g-brush .gb{justify-content:center}
.shapes{width:156px;height:60px;margin:3px 7px 0 5px}
.g-size .gb{justify-content:center}
.g-colors .gb{padding-left:4px}
.cur{width:24px;height:24px;border:1px solid #888;background:#fff;margin:6px 0 8px}
.c1{width:32px;height:32px;margin:2px 0 4px;background:#000;border:2px solid #888;box-shadow:inset 0 0 0 1px #fff}
.palette{display:grid;grid-template-columns:repeat(10,20px);grid-auto-rows:20px;gap:2px;padding:1px 0 0 2px}
.palette i{border:1px solid #999;box-shadow:inset 0 0 0 1px #fff}
.palette .e{box-shadow:none}
.g-3d .big{width:60px}
.g-3d .gb{justify-content:center}

/* workspace */
.workspace{flex:1;padding:5px 0 0 5px;background:linear-gradient(#c8d1e3,#dce6f3)}
.canvas{position:relative;background:#fff;height:calc(100% - 5px);margin-right:78px;box-shadow:5px 5px 4px #b4c1d8}
.shot{position:absolute;left:0;top:0;width:960px;height:270px}
.ui text{font-family:"Noto Sans",sans-serif;font-size:11px}
.lt text{fill:#fff}
.hd text,.hdt{font:10px Roboto,sans-serif}
.rb text{font-family:Roboto,sans-serif}
.rb .cg{font:700 26px Lato,sans-serif;fill:#0033a0}
.snip{position:absolute;display:grid;grid-template-columns:224px 228px;gap:14px;align-items:start;width:474px;padding-left:4px;background:#fff;border-top:1px solid #dcdcdc;font:5px/7px Roboto,sans-serif}
.s1{left:977px;top:3px}.s2{left:984px;top:112px}.s3{left:986px;top:220px}.s4{left:989px;top:327px}
.s5{left:992px;top:421px}.s6{left:998px;top:536px}.s7{left:1005px;top:648px}.s8{left:486px;top:433px}
.mini{padding-top:7px}
.mini h3{font-size:10px;font-weight:400;line-height:12px;margin-bottom:5px}
.mini .ask{padding-right:8px}
.mini .opts{display:grid;gap:2px;margin-top:6px}
.mini li{padding:4px;background:#e6e6e6;border-radius:1px;box-shadow:0 1px 0 #d8d8d8}
.mini .on{background:#4a4a4a;color:#fff;font-weight:500}
.snip .fb{margin-top:2px;padding:7px 4px 3px;border:1px solid #dedede;border-radius:1px;color:#222}
.snip h4{font-size:6px;line-height:8px;font-weight:500;color:#008000;margin-bottom:5px}
.ret{display:block;margin-left:auto;color:#fff;font-weight:700;background:linear-gradient(#4a4a4a,#2c2c2c)}
.mini .ret{width:49px;height:11px;margin-top:5px;margin-right:-2px;border-radius:1px}
.marquee{position:absolute;left:485px;top:427px;width:480px;height:146px}

/* status bar */
.status{display:flex;align-items:center;height:26px;background:#f0f0f0;border-top:1px solid #dcdcdc}
.cell{display:flex;align-items:center;gap:6px;width:156px;height:22px;border-right:1px solid #d4d4d4;padding-left:5px;color:#222}
.rest{flex:1}
.cell svg{width:13px;height:13px}
.zoom{display:flex;align-items:center;width:198px;padding:0 4px 0 26px;gap:7px;color:#222}
.zb{width:16px;height:16px;border:1px solid #888;border-radius:8px;line-height:12px;font-size:14px;flex:none}
.zoom input{appearance:none;flex:1;min-width:0;margin:0 4px;height:16px;background:linear-gradient(transparent 6px,#d0d0d0 6px,#e6e6e6 10px,transparent 10px)}
.zoom input::-webkit-slider-thumb{appearance:none;width:9px;height:16px;background:#0078d7;clip-path:polygon(0 0,100% 0,100% 75%,50% 100%,0 75%)}

/* task bar */
.taskbar{display:flex;align-items:center;height:40px;background:#201d1c;color:#fff}
.edge .taskbar{background:linear-gradient(90deg,#1d1b1a,#2a2c2b 40%,#232222)}
.tk{display:grid;place-items:center;width:48px;height:40px}
.s16{width:18px;height:16px}
.search{display:flex;align-items:center;gap:12px;width:344px;height:40px;background:#333;border:1px solid #5a5a5a;padding-left:10px}
.search input{flex:1;min-width:0;background:none;border:0;padding:0;font:14px/20px "Noto Sans",sans-serif;color:#ccc}
.search input::placeholder{color:#c4c4c4;opacity:1}
.app{display:grid;place-items:center;width:40px;height:40px;margin:0 5px 0 4px;border-bottom:3px solid transparent;padding-top:3px}
.app svg{width:24px;height:24px}
.cur-app{width:48px;margin:0;background:#4b4948;border-color:#76d5f5}
.tk+.cur-app{margin-left:3px;margin-right:1px}
.run{border-color:#76d5f5}
.tray{width:90px;height:20px;margin-left:auto}
.clock{width:60px;margin:0 15px 0 3px;text-align:center;line-height:18px}
.clock.last{margin:0 5px 0 auto}
.note{width:16px;height:18px}
.desk{width:1px;height:40px;background:#777;margin:0 4px 0 20px}

/* Edge window */
.etitle{display:flex;align-items:center;gap:5px;height:23px;padding-left:2px;color:#fff;background:linear-gradient(90deg,#0d0428,#14052e 30%,#250a36 60%,#0b0530)}
.etitle h1{font-size:11px;font-weight:400}
.fav{width:16px;height:16px;background:#fff;color:#1a3f94;font:700 7px/16px "Open Sans",sans-serif;text-align:center}
.url{display:flex;align-items:center;gap:18px;height:31px;padding:0 12px 0 15px;background:#101010;border-top:1px solid #2c2c2c;border-bottom:1px solid #2c2c2c;color:#989898}
.url svg{width:12px;height:16px}
.url p{font-size:15px;line-height:22px;white-space:nowrap}
.url b{font-weight:400;color:#fff}
.chead{display:flex;align-items:center;justify-content:space-between;height:87px;padding:4px 14px 0 20px;background:linear-gradient(90deg,#fff 210px,#fafafa 250px);box-shadow:0 1px 4px #bbb;font:21px/28px Roboto,sans-serif}
.logo{font:700 27px/32px Lato,sans-serif;color:#0033a0;margin-bottom:6px}
.crumbs{display:flex;align-items:center;gap:12px}
.c-a{color:#666}
.chev{width:10px;height:20px}
.x svg{width:26px;height:26px}
.quiz{flex:1;display:grid;grid-template-columns:903fr 908fr;gap:50px;align-items:start;padding:15px 29px 0 30px;font:21px/28px Roboto,sans-serif}
.full{padding-top:16px}
.full h2{font-size:40px;font-weight:400;line-height:48px;margin-bottom:23px}
.full .opts{display:grid;gap:10px;margin:20px 8px 0 0}
.full li{padding:15px 36px 15px 15px;background:#e6e6e6;border-radius:6px;box-shadow:0 2px 2px #d0d0d0}
.full .on{background:#4a4a4a;color:#fff;font-weight:500}
.full .ret{width:194px;height:43px;margin-top:25px;border-radius:5px}
.bad{padding:26px 20px 19px;border:1px solid #aaa;border-radius:6px;color:#000}
.bad h4{font-size:26px;line-height:32px;font-weight:500;color:#990000;margin-bottom:21px}
.cfoot{display:grid;grid-template-columns:1fr auto 1fr;align-items:center;height:65px;padding:0 11px;background:#0033a0;color:#fff;font:14px/16px Roboto,sans-serif;box-shadow:0 -1px 3px #bbb}
.fbtn{display:flex;flex-direction:column;align-items:center;gap:5px;height:51px;width:35px;line-height:14px}
.fbtn svg{width:32px;height:32px}
.fbtn.menu svg{width:35px}
.fnav{display:flex;gap:25px;justify-content:flex-end}
.prog{display:flex;flex-direction:column;align-items:center;gap:3px;font-size:13px}
.prog p{font-size:12px;color:#ccd6ec}
.pl{display:flex;align-items:center;gap:9px}
.bar{width:253px;height:10px;border-radius:5px;background:#2f6ee6;overflow:hidden}
.bar i{display:block;height:10px;background:#fff}
```
